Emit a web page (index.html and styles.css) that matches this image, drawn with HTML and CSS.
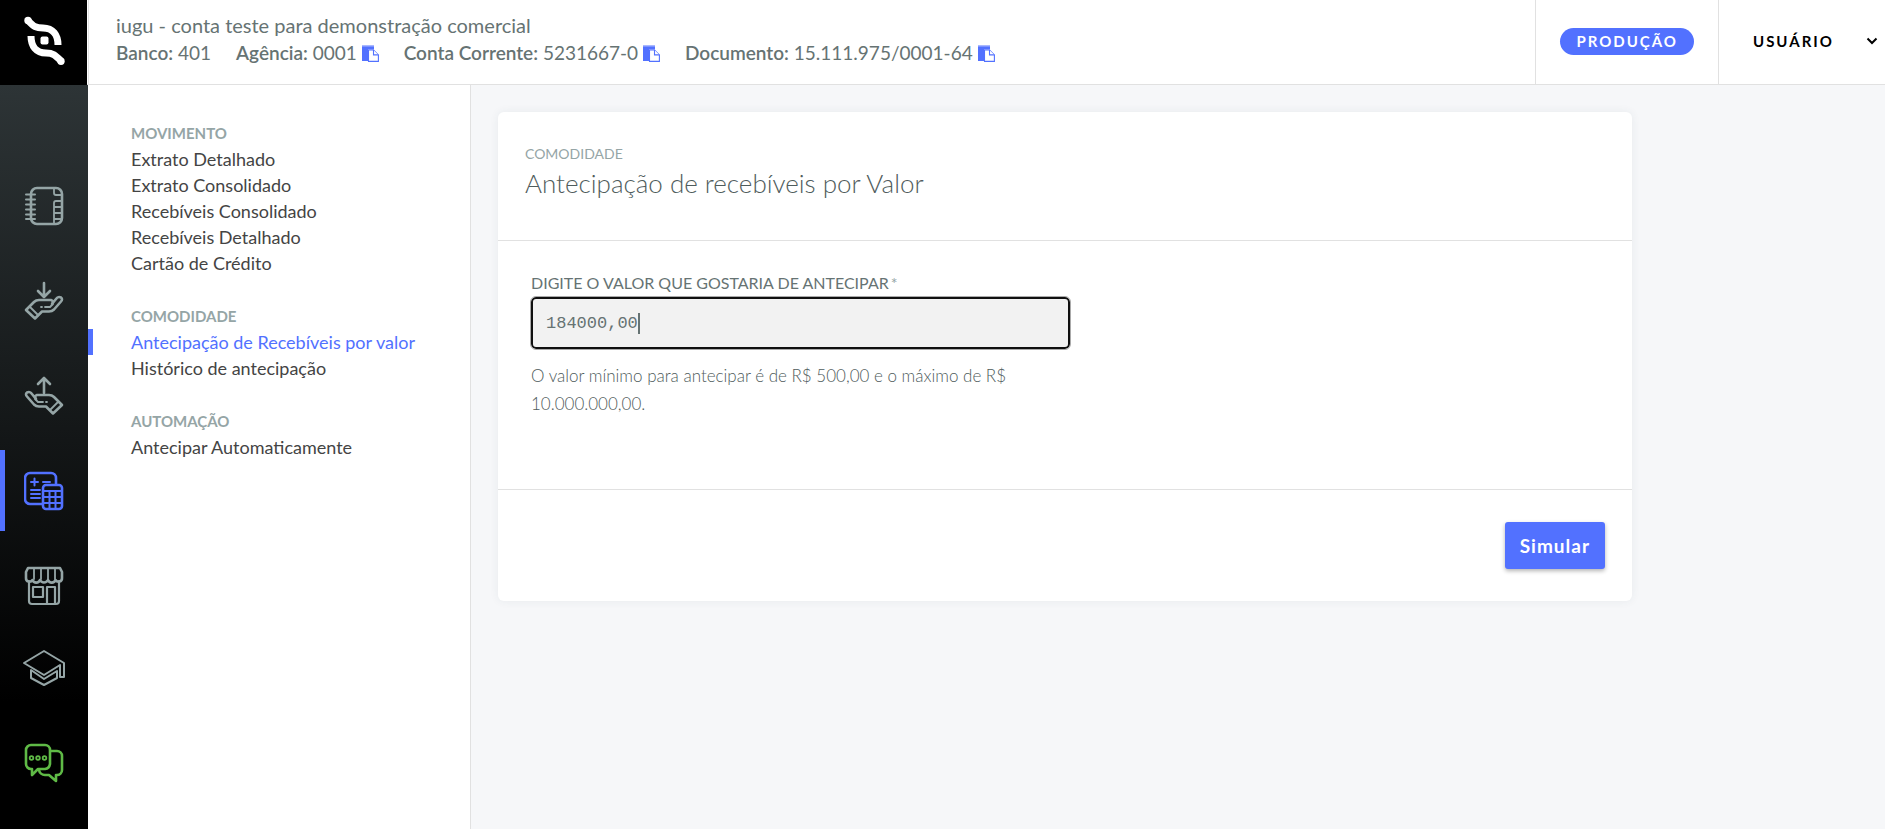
FILE: index.html
```html
<!DOCTYPE html>
<html lang="pt-BR">
<head>
    <meta charset="UTF-8">
    <meta name="viewport" content="width=device-width, initial-scale=1.0">
    <title>Antecipação de recebíveis</title>
    <link rel="stylesheet" href="styles.css">
</head>
<body>
    <svg class="sprite" aria-hidden="true">
        <symbol id="copy" viewBox="0 0 17 17">
            <path d="M0 0h12v4.500H6V16H0z" fill="#5271ff"/>
            <path d="M0 0h12v1.500H0z" fill="#a9b8ff"/>
            <path d="M6.500 5h5l4.900 4.900v6.500H6.500z" fill="#fff" stroke="#5271ff" stroke-width="1.100"/>
            <path d="M11.500 5v4.900h4.900" fill="#fff" stroke="#5271ff" stroke-width="1.100"/>
        </symbol>
    </svg>

    <header class="topbar">
        <a class="logo" href="#" aria-label="iugu">
            <svg width="42" height="50" viewBox="0 0 42 50" fill="none" stroke="#fff" stroke-width="7">
                <path d="M5 4.500C11 11 13 12 20 12c10 0 15 7 15 17"/>
                <path d="M8 20c0 10 5 17 15 17 7 0 9 2 15 8"/>
                <circle cx="5" cy="4.500" r="3.700" fill="#fff" stroke="none"/>
                <circle cx="38" cy="45.300" r="3.700" fill="#fff" stroke="none"/>
                <rect x="17.500" y="20.500" width="8" height="8" rx="2" fill="#fff" stroke="none"/>
            </svg>
        </a>
        <div class="account">
            <div class="account-name">iugu - conta teste para demonstração comercial</div>
            <ul class="account-data">
                <li><b>Banco:</b> 401</li>
                <li><b>Agência:</b> 0001 <button class="copy" aria-label="Copiar agência"><svg><use href="#copy"/></svg></button></li>
                <li><b>Conta Corrente:</b> 5231667-0 <button class="copy" aria-label="Copiar conta"><svg><use href="#copy"/></svg></button></li>
                <li><b>Documento:</b> 15.111.975/0001-64 <button class="copy" aria-label="Copiar documento"><svg><use href="#copy"/></svg></button></li>
            </ul>
        </div>
        <div class="env"><span class="badge">PRODUÇÃO</span></div>
        <button class="user">
            USUÁRIO
            <svg width="12" height="8" viewBox="0 0 12 8" fill="none" stroke="#000" stroke-width="2"><path d="M1.500 1.500L6 6l4.500-4.500"/></svg>
        </button>
    </header>

    <div class="page">
        <nav class="rail" aria-label="Principal">
            <a href="#" aria-label="Extratos">
                <svg viewBox="0 0 40 40">
                    <path d="M13 2h19a6 6 0 0 1 6 6v24a6 6 0 0 1-6 6H13a6 6 0 0 1-6-6V8a6 6 0 0 1 6-6z"/>
                    <path d="M2 8.500h9M2 13.500h9M2 18.500h9M2 23.500h9M2 28.500h9M2 33h9" stroke-width="2"/>
                    <path d="M30 2v5a2 2 0 0 0 2 2h6M38 15h-6a2 2 0 0 0-2 2v21M30 21h8M30 27h8M30 33h8" stroke-width="1.800"/>
                </svg>
            </a>
            <a href="#" aria-label="Receber">
                <svg viewBox="0 0 40 40">
                    <path d="M20 2v14M14 10l6 6 6-6"/>
                    <path d="M2 29l8-8q2-2 5-2h12q3 1 1 4l4-5q2-3 5-1.500 2 1.500 0 4l-7 8q-2 2-5 2h-7l-7 7z"/>
                    <path d="M6 26l8 8M17 26h1M21 26h5l3-3" stroke-width="1.800"/>
                </svg>
            </a>
            <a href="#" aria-label="Pagar">
                <svg viewBox="0 0 40 40">
                    <path d="M20 17V2M14 8l6-6 6 6"/>
                    <path d="M38 29l-8-8q-2-2-5-2H13q-3 1-1 4l-4-5q-2-3-5-1.500-2 1.500 0 4l7 8q2 2 5 2h7l7 7z"/>
                    <path d="M34 26l-8 8M22 26h1M11 23l3 3h5" stroke-width="1.800"/>
                </svg>
            </a>
            <a href="#" class="active" aria-label="Financeiro">
                <svg viewBox="0 0 40 40">
                    <path d="M18 33H6a5 5 0 0 1-5-5V7a5 5 0 0 1 5-5h21a5 5 0 0 1 5 5v6"/>
                    <path d="M7 11h7M10.500 7.500v7M19 11h7M7 19h9M7 23h9M7 27h9" stroke-width="2"/>
                    <rect x="19" y="14" width="19" height="24" rx="3"/>
                    <path d="M19 20h19M19 26h19M19 32h19M25.500 20v18M31.500 20v18" stroke-width="2"/>
                </svg>
            </a>
            <a href="#" aria-label="Loja">
                <svg viewBox="0 0 40 40">
                    <path d="M4 2h32l2 4v6a3.500 3.500 0 0 1-6.500 2 4 4 0 0 1-7.500 0 4.500 4.500 0 0 1-8 0 4 4 0 0 1-7.500 0A3.500 3.500 0 0 1 2 12V6z"/>
                    <path d="M10 2v11M17 2v11M24 2v11M31 2v11" stroke-width="1.800"/>
                    <path d="M5 15v20a3 3 0 0 0 3 3h24a3 3 0 0 0 3-3V15M9 21h10v10H9zM23 38V21h8v17" stroke-width="2.200"/>
                </svg>
            </a>
            <a href="#" class="academy" aria-label="Academia">
                <svg viewBox="0 0 44 40">
                    <path d="M22 3l20 12v14h-4V17L22 27 2 15z" stroke-width="2"/>
                    <path d="M9 22v8l13 7 13-7v-7l-13 8z" stroke-width="2"/>
                </svg>
            </a>
            <a href="#" class="chat" aria-label="Atendimento">
                <svg viewBox="0 0 40 40">
                    <path d="M7 2h14a5 5 0 0 1 5 5v14a6 6 0 0 1-5 5h-7l-6 6v-6H7a5 5 0 0 1-5-5V7a5 5 0 0 1 5-5z"/>
                    <path d="M27 8h6a5 5 0 0 1 5 5v14a5 5 0 0 1-5 5h-1v6l-7-6h-4a6 6 0 0 1-6-5"/>
                    <circle cx="7.500" cy="15" r="1.800" stroke-width="1.800"/>
                    <circle cx="14" cy="15" r="1.800" stroke-width="1.800"/>
                    <circle cx="20.500" cy="15" r="1.800" stroke-width="1.800"/>
                </svg>
            </a>
        </nav>

        <nav class="submenu" aria-label="Financeiro">
            <h2>MOVIMENTO</h2>
            <ul>
                <li><a href="#">Extrato Detalhado</a></li>
                <li><a href="#">Extrato Consolidado</a></li>
                <li><a href="#">Recebíveis Consolidado</a></li>
                <li><a href="#">Recebíveis Detalhado</a></li>
                <li><a href="#">Cartão de Crédito</a></li>
            </ul>
            <h2>COMODIDADE</h2>
            <ul>
                <li><a href="#" class="active">Antecipação de Recebíveis por valor</a></li>
                <li><a href="#">Histórico de antecipação</a></li>
            </ul>
            <h2>AUTOMAÇÃO</h2>
            <ul>
                <li><a href="#">Antecipar Automaticamente</a></li>
            </ul>
        </nav>

        <main class="content">
            <form class="card">
                <div class="card-head">
                    <div class="category">COMODIDADE</div>
                    <h1>Antecipação de recebíveis por Valor</h1>
                </div>
                <div class="card-body">
                    <div class="field">
                        <label for="valor">DIGITE O VALOR QUE GOSTARIA DE ANTECIPAR<span class="required">*</span></label>
                        <div class="input-wrap">
                            <input id="valor" type="text" value="184000,00">
                            <i class="caret"></i>
                        </div>
                        <p>O valor mínimo para antecipar é de R$ 500,00 e o máximo de R$ 10.000.000,00.</p>
                    </div>
                </div>
                <div class="card-foot">
                    <button class="submit" type="button">Simular</button>
                </div>
            </form>
        </main>
    </div>
</body>
</html>
```
FILE: styles.css
```css
*{
    margin: 0;
    padding: 0;
    box-sizing: border-box;
    list-style: none;
}
body{
    display: flex;
    flex-direction: column;
    min-height: 100vh;
    background: #f6f7f9;
    color: #667373;
    font-family: Lato, "Open Sans", sans-serif;
    font-size: 18px;
}
a{
    color: inherit;
    text-decoration: none;
}
button{
    border: 0;
    background: none;
    font-family: inherit;
    cursor: pointer;
}
.sprite{
    display: none;
}

/* topo */
.topbar{
    display: flex;
    height: 85px;
    background: #fff;
    border-bottom: 1px solid #e1e1e1;
}
.logo{
    display: flex;
    align-items: center;
    justify-content: center;
    width: 87px;
    height: 85px;
    padding-bottom: 4px;
    background: #000;
}
.account{
    flex: 1;
    margin-left: 1px;
    padding: 11px 0 0 27px;
    border-left: 1px solid #e1e1e1;
    font-size: 19px;
    line-height: 28px;
    white-space: nowrap;
}
.account-name{
    font-size: 20px;
}
.account-data{
    display: flex;
    gap: 25px;
}
.account-data b{
    font-weight: 600;
}
.copy svg{
    display: block;
    width: 17px;
    height: 17px;
}
.copy{
    vertical-align: -2px;
}
.env{
    display: flex;
    align-items: center;
    padding: 0 24px 2px;
    border-left: 1px solid #e1e1e1;
}
.badge{
    padding: 0 16px;
    border-radius: 14px;
    background: #5271ff;
    color: #fff;
    font-size: 15px;
    font-weight: 700;
    letter-spacing: 2px;
    line-height: 27px;
}
.user{
    display: flex;
    align-items: center;
    justify-content: space-between;
    width: 167px;
    padding: 0 7px 3px 34px;
    border-left: 1px solid #e1e1e1;
    color: #000;
    font-size: 15px;
    font-weight: 700;
    letter-spacing: 2px;
}

.page{
    display: flex;
    flex: 1;
}

/* barra de icones */
.rail{
    display: flex;
    flex-direction: column;
    gap: 14px;
    width: 88px;
    padding-top: 80px;
    background: linear-gradient(#2d3436, #000 83%);
}
.rail a{
    display: flex;
    align-items: center;
    justify-content: center;
    height: 81px;
    padding-right: 5px;
    border-left: 5px solid transparent;
    color: #95a5a6;
}
.rail a.active{
    border-color: #5271ff;
    color: #5271ff;
}
.rail svg{
    width: 40px;
    height: 40px;
    fill: none;
    stroke: currentColor;
    stroke-width: 2.6;
    stroke-linejoin: round;
    stroke-linecap: round;
}
.rail a.academy{
    margin-top: -13px;
}
.rail .academy svg{
    width: 44px;
}
.rail a.chat{
    color: #5fba46;
}

/* submenu */
.submenu{
    width: 383px;
    padding-top: 35px;
    background: #fff;
    border-right: 1px solid #e1e1e1;
    line-height: 26px;
}
.submenu h2{
    padding-left: 43px;
    color: #95a5a6;
    font-size: 15px;
    font-weight: 700;
}
.submenu ul{
    margin-bottom: 27px;
}
.submenu a{
    display: block;
    padding-left: 38px;
    border-left: 5px solid transparent;
    color: #444;
}
.submenu a.active{
    border-color: #5271ff;
    color: #5271ff;
}

/* conteudo */
.content{
    flex: 1;
    padding: 27px;
}
.card{
    max-width: 1134px;
    background: #fff;
    border-radius: 6px;
    box-shadow: 0 0 10px rgba(45, 70, 90, .07);
}
.card-head{
    padding: 28px 27px 42px;
    border-bottom: 1px solid #e1e1e1;
}
.category{
    color: #95a5a6;
    font-size: 14px;
    line-height: 28px;
}
.card h1{
    color: #4f5c5c;
    font-size: 26px;
    font-weight: 300;
    line-height: 30px;
}
.card-body{
    padding: 28px 33px 71px;
    border-bottom: 1px solid #e1e1e1;
}
.field{
    max-width: 539px;
}
.field label{
    display: block;
    font-size: 16px;
    line-height: 28px;
}
.required{
    margin-left: 2px;
    color: #95a5a6;
}
.input-wrap{
    position: relative;
    font-family: "Liberation Mono", monospace;
    font-size: 17px;
}
.field input{
    display: block;
    width: 100%;
    height: 52px;
    padding: 0 13px;
    border: 2px solid #101010;
    border-radius: 5px;
    background: #f2f2f2;
    color: #667373;
    font: inherit;
    outline: 1px solid #aaa;
}
.caret{
    position: absolute;
    top: 16px;
    left: calc(15px + 9ch);
    width: 2px;
    height: 21px;
    background: #667373;
}
.field p{
    padding-top: 13px;
    color: #4f5c5c;
    font-size: 17px;
    font-weight: 300;
    line-height: 28px;
}
.card-foot{
    display: flex;
    justify-content: flex-end;
    padding: 32px 27px;
}
.submit{
    height: 47px;
    padding: 0 15px;
    border-radius: 3px;
    background: #5271ff;
    box-shadow: 0 2px 4px rgba(0, 0, 0, .3);
    color: #fff;
    font-size: 19px;
    font-weight: 700;
    letter-spacing: 1px;
}
```
